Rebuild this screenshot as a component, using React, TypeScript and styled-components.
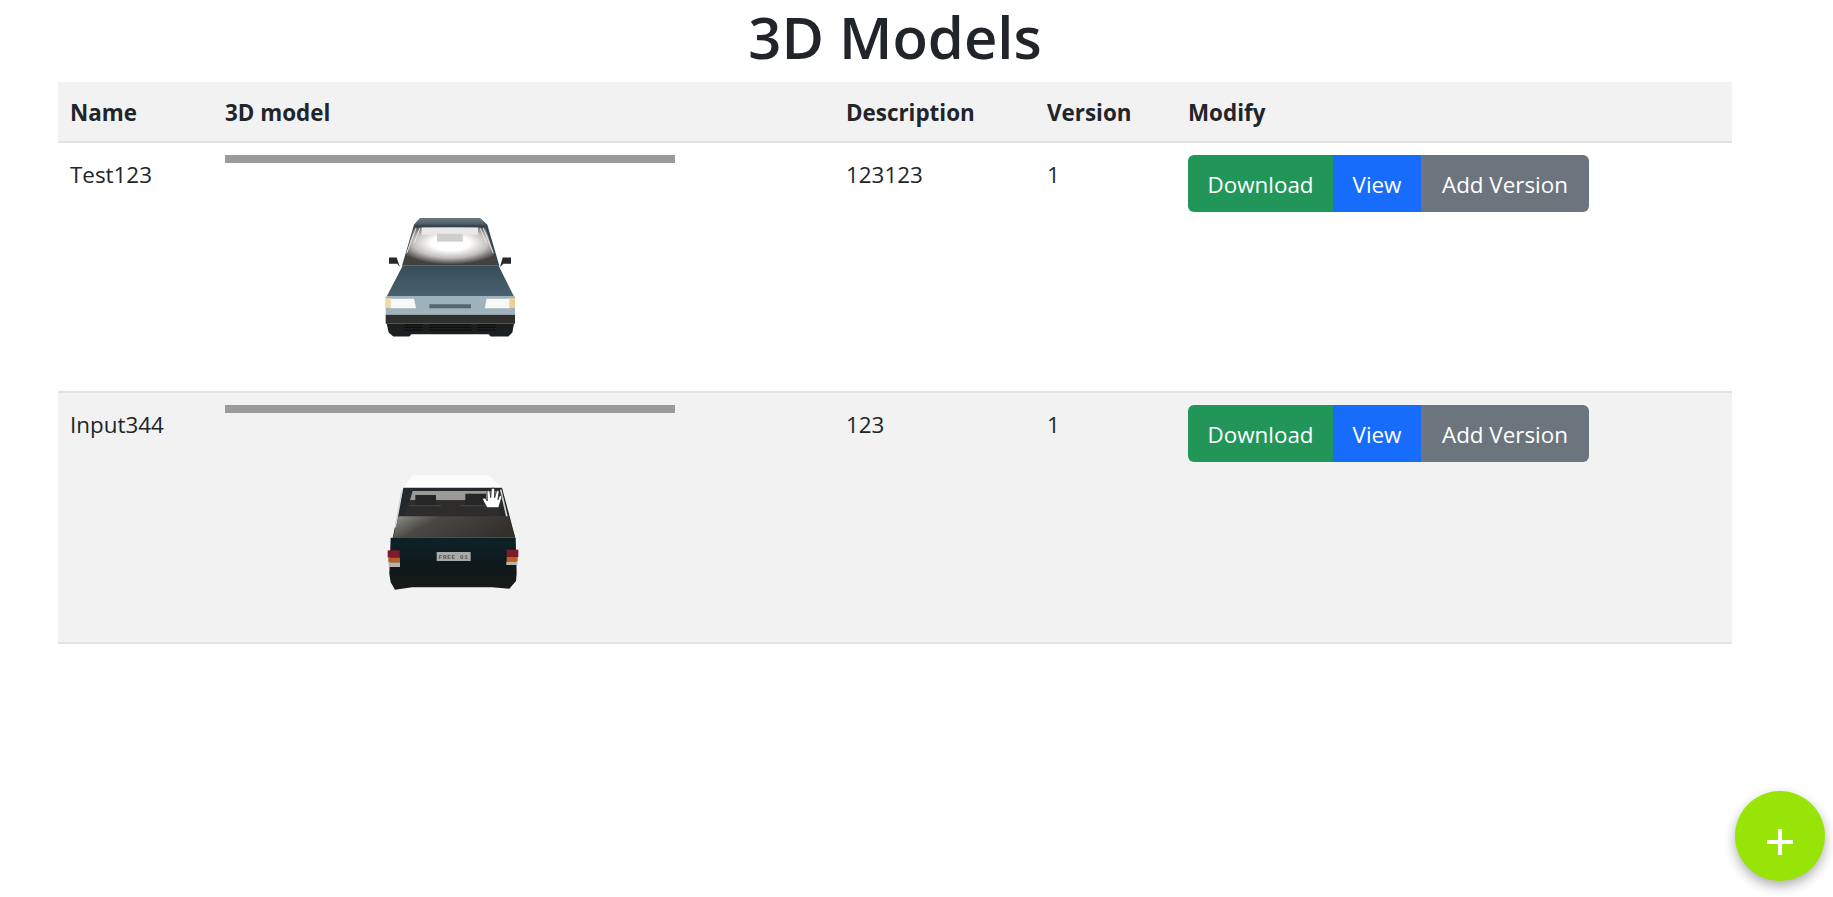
import React from "react";
import styled, { createGlobalStyle } from "styled-components";

const GlobalStyle = createGlobalStyle`
  html, body {
    margin: 0;
    padding: 0;
    background: #fff;
    color: #212529;
    font-family: "Open Sans", "Noto Sans", sans-serif;
    font-size: 22.4px;
  }
  * { box-sizing: border-box; }
`;

const Page = styled.main`
  margin: 0 101px 0 58px;
`;

const Title = styled.h1`
  margin: 0;
  height: 82px;
  padding-top: 1px;
  font-size: 58px;
  font-weight: 600;
  line-height: 72px;
  text-align: center;
`;

const Table = styled.table`
  width: 100%;
  table-layout: fixed;
  border-collapse: collapse;
`;

const HeadCell = styled.th<{ $w?: number }>`
  width: ${(p) => (p.$w ? `${p.$w}px` : "auto")};
  height: 60px;
  padding: 2px 12px 0;
  font-weight: 700;
  line-height: 36px;
  text-align: left;
  background: #f2f2f2;
  border-bottom: 2px solid #e2e2e2;
`;

const Row = styled.tr<{ $alt?: boolean }>`
  background: ${(p) => (p.$alt ? "#f2f2f2" : "#fff")};
  border-bottom: 2px solid #e2e2e2;

  &:last-child td {
    height: 251px;
  }
`;

const Cell = styled.td`
  height: 250px;
  padding: 12px;
  vertical-align: top;
  line-height: 36px;
`;

const TextCell = styled(Cell)`
  padding-top: 14px;
`;

const Viewer = styled.div`
  width: 450px;
  height: 224px;
  display: flex;
  flex-direction: column;
  align-items: center;
`;

const ProgressBar = styled.div`
  width: 100%;
  height: 8px;
  flex: none;
  background: #9b9b9b;
`;

const ModelCanvas = styled.div<{ $top: number }>`
  padding-top: ${(p) => p.$top}px;
  line-height: 0;

  svg {
    filter: blur(0.35px);
  }
`;

const ButtonGroup = styled.div`
  display: inline-flex;
  height: 57px;
  border-radius: 6px;
  overflow: hidden;
`;

const Button = styled.button<{ $bg: string; $w: number }>`
  width: ${(p) => p.$w}px;
  padding: 2px 0 0;
  border: 0;
  color: #fff;
  background: ${(p) => p.$bg};
  font: inherit;
  line-height: 36px;
  cursor: pointer;
`;

const Fab = styled.button`
  position: fixed;
  right: 8px;
  bottom: 16px;
  width: 90px;
  height: 90px;
  padding: 12px 0 0;
  display: flex;
  align-items: center;
  justify-content: center;
  border: 0;
  border-radius: 50%;
  background: #97e406;
  box-shadow: 0 5px 12px rgba(0, 0, 0, 0.32);
  cursor: pointer;
`;

function FrontCar() {
  return (
    <svg width="140" height="127" viewBox="120 70 420 380">
      <defs>
        <radialGradient id="glass" cx="50%" cy="42%" r="58%">
          <stop offset="0.35" stopColor="#ffffff" />
          <stop offset="0.68" stopColor="#c4c1bf" />
          <stop offset="1" stopColor="#45413f" />
        </radialGradient>
        <linearGradient id="hood" x1="0" y1="0" x2="0" y2="1">
          <stop offset="0" stopColor="#394d59" />
          <stop offset="1" stopColor="#486170" />
        </linearGradient>
        <linearGradient id="roof" x1="0" y1="0" x2="0" y2="1">
          <stop offset="0" stopColor="#6c7b82" />
          <stop offset="1" stopColor="#4b5a62" />
        </linearGradient>
      </defs>
      <path d="M240 85H420L442 105L478 228H186L222 105Z" fill="#37444c" />
      <path d="M240 85H420L442 105H222Z" fill="url(#roof)" />
      <path d="M222 113H436L472 224H190Z" fill="url(#glass)" />
      <path d="M245 113H414V135H370V155H291V135H245Z" fill="#e9e9e9" />
      <path d="M291 132H368V155H291Z" fill="#cfcfcf" />
      <path d="M228 115L200 190M240 115L222 160M430 115L460 190M420 115L440 160" stroke="#e4e6e6" strokeWidth="3" />
      <path d="M147 203H170L180 232L172 222H147Z" fill="#26292b" />
      <path d="M513 203H488L480 232L490 222H513Z" fill="#26292b" />
      <path d="M188 228H476L522 320H140Z" fill="url(#hood)" />
      <path d="M137 320H525V375H137Z" fill="#9fb3bc" />
      <path d="M150 327H222L228 355H150Z" fill="#f7f8f8" />
      <path d="M136 325H152V354H136Z" fill="#f4d9a4" />
      <path d="M434 355L440 327H510V355Z" fill="#f7f8f8" />
      <path d="M508 325H525V354H508Z" fill="#f0cf94" />
      <path d="M268 343H393V355H268Z" fill="#56666d" />
      <path d="M137 375H525V402H137Z" fill="#2f2f2e" />
      <path d="M140 402H522L517 428L505 440H452L446 433H214L208 440H160L146 428Z" fill="#1c1f20" />
      <path d="M194 405H248M194 413H248M194 421H248M268 405H394M268 413H394M268 421H394M412 405H468M412 413H468M412 421H468" stroke="#0b0c0c" strokeWidth="3" />
    </svg>
  );
}

function RearCar() {
  return (
    <svg width="140" height="120" viewBox="120 65 420 360">
      <defs>
        <linearGradient id="roofTop" x1="0" y1="0" x2="0" y2="1">
          <stop offset="0" stopColor="#fafafa" />
          <stop offset="1" stopColor="#ffffff" />
        </linearGradient>
        <linearGradient id="trunk" x1="0" y1="0.2" x2="1" y2="0.5">
          <stop offset="0" stopColor="#88887f" />
          <stop offset="0.3" stopColor="#4a4842" />
          <stop offset="1" stopColor="#33302c" />
        </linearGradient>
        <linearGradient id="rear" x1="0" y1="0" x2="0" y2="1">
          <stop offset="0" stopColor="#0e2128" />
          <stop offset="0.55" stopColor="#0f181b" />
          <stop offset="1" stopColor="#1a1a19" />
        </linearGradient>
      </defs>
      <path d="M218 75H445L488 112H190Z" fill="url(#roofTop)" />
      <path d="M190 112H486L526 262H158Z" fill="#23292c" />
      <path d="M218 122H470L474 150H210Z" fill="#9a9a97" />
      <path d="M210 150H474L480 198H192Z" fill="#2f2d2b" />
      <path d="M226 134H288V168H226ZM376 130H438V168H376Z" fill="#262626" />
      <path d="M208 166H304M362 166H474" stroke="#4a4845" strokeWidth="3" />
      <path d="M186 120L166 232M482 118L508 230" stroke="#d6d6d4" strokeWidth="5" />
      <path d="M176 198H505L525 260H160Z" fill="url(#trunk)" />
      <path d="M152 262H527L530 370L528 392L508 415L456 411H216L165 418L152 396L148 370Z" fill="url(#rear)" />
      <path d="M143 300H179V322H143Z" fill="#7e1a2c" />
      <path d="M145 322H180V336H145Z" fill="#bb5f1f" />
      <path d="M146 336H180V350H146Z" fill="#b9b4ac" />
      <path d="M500 298H535V320H500Z" fill="#7e1a2c" />
      <path d="M500 320H533V334H500Z" fill="#bb5f1f" />
      <path d="M499 334H532V344H499Z" fill="#b9b4ac" />
      <path d="M290 305H392V332H290Z" fill="#a8a9a9" />
      <text x="341" y="325" fontFamily="Liberation Mono, monospace" fontSize="18" fontWeight="700" textAnchor="middle" letterSpacing="2" fill="#555">FREE 01</text>
      <path
        d="M441 172L429 150C426 145 433 140 438 146L442 152L441 126C441 120 449 120 450 126L452 142L454 118C455 112 463 112 464 118L464 142L469 124C471 118 478 120 477 126L474 148L478 138C480 133 487 135 485 142L476 172Z"
        fill="#fff"
        stroke="#2a2a2a"
        strokeWidth="2.5"
        strokeLinejoin="round"
      />
    </svg>
  );
}

const rows = [
  { name: "Test123", description: "123123", version: 1, model: <FrontCar />, top: 50 },
  { name: "Input344", description: "123", version: 1, model: <RearCar />, top: 59 },
];

export default function App() {
  return (
    <>
      <GlobalStyle />
      <Page>
        <Title>3D Models</Title>
        <Table>
          <thead>
            <tr>
              <HeadCell $w={155}>Name</HeadCell>
              <HeadCell $w={621}>3D model</HeadCell>
              <HeadCell $w={201}>Description</HeadCell>
              <HeadCell $w={141}>Version</HeadCell>
              <HeadCell>Modify</HeadCell>
            </tr>
          </thead>
          <tbody>
            {rows.map((row, i) => (
              <Row key={row.name} $alt={i % 2 === 1}>
                <TextCell>{row.name}</TextCell>
                <Cell>
                  <Viewer>
                    <ProgressBar />
                    <ModelCanvas $top={row.top}>{row.model}</ModelCanvas>
                  </Viewer>
                </Cell>
                <TextCell>{row.description}</TextCell>
                <TextCell>{row.version}</TextCell>
                <Cell>
                  <ButtonGroup>
                    <Button $bg="#229659" $w={145}>Download</Button>
                    <Button $bg="#176cfb" $w={88}>View</Button>
                    <Button $bg="#6c757d" $w={168}>Add Version</Button>
                  </ButtonGroup>
                </Cell>
              </Row>
            ))}
          </tbody>
        </Table>
      </Page>
      <Fab aria-label="Add model">
        <svg width="26" height="26" viewBox="0 0 26 26">
          <path d="M13 0V26M0 13H26" stroke="#fff" strokeWidth="4" />
        </svg>
      </Fab>
    </>
  );
}
